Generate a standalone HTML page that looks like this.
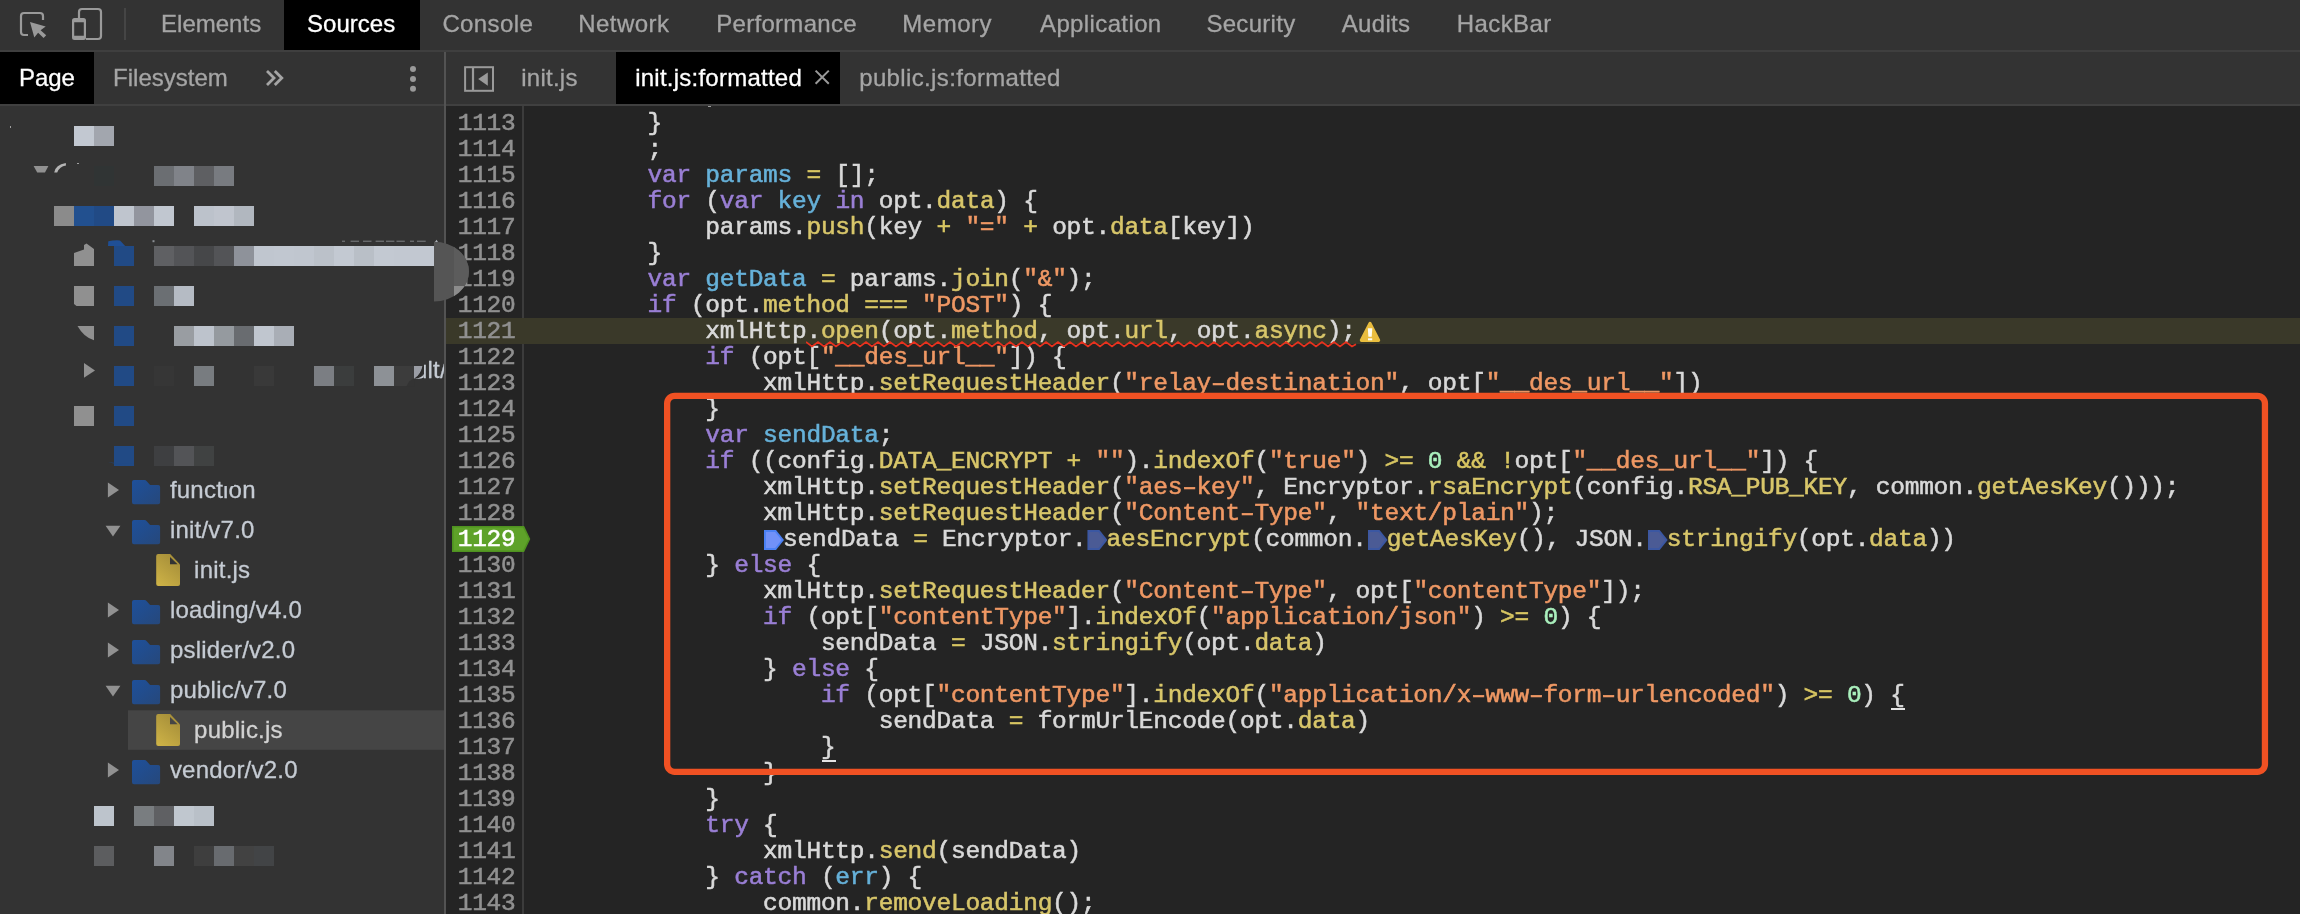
<!DOCTYPE html>
<html>
<head>
<meta charset="utf-8">
<title>DevTools</title>
<style>
html,body{margin:0;padding:0;}
body{width:2300px;height:914px;overflow:hidden;background:#333333;position:relative;font-family:"Liberation Sans",sans-serif;color:#a5a5a5;}
.abs{position:absolute;}
/* top toolbar */
#topbar{left:0;top:0;width:2300px;height:50px;background:#333333;}
#topline{left:0;top:50px;width:2300px;height:2px;background:#3f3f3f;}
.ttab{position:absolute;top:0;height:50px;line-height:47px;font-size:24px;color:#a5a5a5;white-space:nowrap;-webkit-text-stroke:0.3px;}
.ttab.sel{background:#000;color:#fff;}
/* second row */
#row2{left:0;top:52px;width:2300px;height:52px;background:#333333;}
#row2line{left:0;top:104px;width:2300px;height:2px;background:#404040;}
.stab{position:absolute;top:52px;height:52px;line-height:51px;font-size:24px;color:#a5a5a5;white-space:nowrap;-webkit-text-stroke:0.3px;}
.et{letter-spacing:0.24px;}
.stab.sel{background:#000;color:#fff;}
/* sidebar */
#sidebar{left:0;top:106px;width:444px;height:808px;background:#333333;}
#vdiv{left:444px;top:52px;width:2px;height:862px;background:#535353;}
.b{position:absolute;display:block;}
.tt{position:absolute;height:40px;line-height:40px;font-size:24px;color:#c5cbd3;white-space:nowrap;letter-spacing:0.22px;-webkit-text-stroke:0.3px;}
/* editor */
#editor{left:446px;top:106px;width:1854px;height:808px;background:#242424;}
#gutterline{left:522px;top:106px;width:2px;height:808px;background:#3c3c3c;}
.ln{position:absolute;left:446px;width:69.5px;text-align:right;height:26px;line-height:26px;font-family:"Liberation Mono",monospace;font-size:24.5px;letter-spacing:-0.2524px;color:#909090;white-space:pre;-webkit-text-stroke:0.55px;}
.cl{position:absolute;left:531.9px;height:26px;line-height:26px;font-family:"Liberation Mono",monospace;font-size:24.5px;letter-spacing:-0.2524px;color:#d9d9d9;white-space:pre;-webkit-text-stroke:0.55px;}
.k{color:#9a7fd5;}
.d{color:#66b1d9;}
.p{color:#d8c66a;}
.s{color:#ef9864;}
.n{color:#aaf0bd;}
.o{color:#d8c662;}
.w{color:inherit;}
.p.w{color:#d8c66a;}
.u{}
.ul{height:2px;width:14.6px;background:#e4e4e4;}
.hl{left:446px;width:1854px;height:26px;background:#3a3929;}
.bpln{left:452px;width:80px;height:26px;}
.lnbp{color:#fff;}
.bp0,.bp1{display:inline-block;width:20px;height:20px;vertical-align:-4px;margin:0 -0.9px 0 0.9px;letter-spacing:0;}
.bp0,.bp1{position:relative;clip-path:polygon(0 0,60% 0,100% 50%,60% 100%,0 100%);}
.bp0::after,.bp1::after{content:"";position:absolute;left:1.7px;top:1.7px;right:2.4px;bottom:1.7px;clip-path:polygon(0 0,58% 0,100% 50%,58% 100%,0 100%);}
.bp1{background:#4b81f4;}
.bp1::after{background:#7191f8;}
.bp0{background:#3b57a2;}
.bp0::after{background:#4b5b95;}
.warn{position:absolute;left:1358px;top:320px;}


</style>
</head>
<body>
<div id="root" class="abs" style="left:0;top:0;width:2300px;height:914px;overflow:hidden;will-change:transform">
<div id="topbar" class="abs"></div>
<div id="topline" class="abs"></div>
<div id="row2" class="abs"></div>
<div id="row2line" class="abs"></div>
<div id="sidebar" class="abs"></div>
<div id="editor" class="abs"></div>
<div id="gutterline" class="abs"></div>
<div id="vdiv" class="abs"></div>
<svg class="abs" style="left:0;top:0" width="140" height="50" viewBox="0 0 140 50">
<path d="M28 35 H24 Q21 35 21 32 V16 Q21 13 24 13 H40 Q43 13 43 16 V20" fill="none" stroke="#9a9a9a" stroke-width="2.2"/>
<path d="M30 22 L45.7 26.6 L40.6 30.2 L46.2 35.3 L43.6 37.9 L38.1 32.7 L34.3 37.6 Z" fill="#9a9a9a"/>
<path d="M79 18 V12 Q79 9 82 9 H98 Q101 9 101 12 V36 Q101 39 98 39 H86" fill="none" stroke="#9a9a9a" stroke-width="2.2"/>
<path d="M74.5 18 H83.5 Q86 18 86 20.5 V37.5 Q86 40 83.5 40 H74.5 Q72 40 72 37.5 V20.5 Q72 18 74.5 18 Z M74.2 22.2 V35.8 H83.8 V22.2 Z" fill="#9a9a9a" fill-rule="evenodd"/>
<rect x="124" y="8" width="2" height="32" fill="#454545"/>
</svg>
<div class="ttab" style="left:161.1px">Elements</div>
<div class="ttab sel" style="left:284px;width:136px"><span style="position:absolute;left:23.1px">Sources</span></div>
<div class="ttab" style="left:442.4px;letter-spacing:0.4px">Console</div>
<div class="ttab" style="left:578.2px;letter-spacing:0.45px">Network</div>
<div class="ttab" style="left:716.2px;letter-spacing:0.3px">Performance</div>
<div class="ttab" style="left:902.2px;letter-spacing:0.55px">Memory</div>
<div class="ttab" style="left:1040px;letter-spacing:0.38px">Application</div>
<div class="ttab" style="left:1206.4px;letter-spacing:0.3px">Security</div>
<div class="ttab" style="left:1341.8px;letter-spacing:0.3px">Audits</div>
<div class="ttab" style="left:1456.8px;letter-spacing:0.4px">HackBar</div>

<div class="stab sel" style="left:0;width:94px"><span style="position:absolute;left:18.9px">Page</span></div>
<div class="stab" style="left:113.1px">Filesystem</div>
<svg class="abs" style="left:260px;top:60px" width="30" height="36" viewBox="0 0 30 36"><path d="M7 11 L14 18 L7 25 M14.8 11 L21.8 18 L14.8 25" fill="none" stroke="#a5a5a5" stroke-width="2.8"/></svg>
<svg class="abs" style="left:405px;top:60px" width="16" height="36" viewBox="0 0 16 36"><circle cx="8" cy="9" r="3" fill="#9a9a9a"/><circle cx="8" cy="19" r="3" fill="#9a9a9a"/><circle cx="8" cy="28.7" r="3" fill="#9a9a9a"/></svg>
<svg class="abs" style="left:462px;top:64px" width="36" height="30" viewBox="0 0 36 30"><rect x="3.1" y="3.2" width="27.9" height="23.6" fill="none" stroke="#9a9a9a" stroke-width="2"/><rect x="9.9" y="3.2" width="2.2" height="23.6" fill="#9a9a9a"/><path d="M25.8 8.5 V21.7 L16.2 15.1 Z" fill="#9a9a9a"/></svg>
<div class="stab et" style="left:521.3px">init.js</div>
<div class="stab sel" style="left:616px;width:224px"><span class="et" style="position:absolute;left:19.2px">init.js:formatted</span></div>
<svg class="abs" style="left:812.3px;top:67px" width="20" height="20" viewBox="0 0 20 20"><path d="M3.6 3.6 L16.8 16.8 M16.8 3.6 L3.6 16.8" fill="none" stroke="#9a9a9a" stroke-width="2"/></svg>
<div class="stab et" style="left:859.2px;letter-spacing:0.36px">public.js:formatted</div>

<i class="b" style="left:74px;top:126px;width:20px;height:20px;background:#c2c8d1"></i>
<i class="b" style="left:94px;top:126px;width:20px;height:20px;background:#a2a6ae"></i>
<i class="b" style="left:154px;top:166px;width:20px;height:20px;background:#6b6e72"></i>
<i class="b" style="left:174px;top:166px;width:20px;height:20px;background:#808389"></i>
<i class="b" style="left:194px;top:166px;width:20px;height:20px;background:#5e5f62"></i>
<i class="b" style="left:214px;top:166px;width:20px;height:20px;background:#787b80"></i>
<i class="b" style="left:94px;top:166px;width:20px;height:20px;background:#303434"></i>
<i class="b" style="left:54px;top:206px;width:20px;height:20px;background:#8b8b8b"></i>
<i class="b" style="left:74px;top:206px;width:20px;height:20px;background:#22508f"></i>
<i class="b" style="left:94px;top:206px;width:20px;height:20px;background:#214a85"></i>
<i class="b" style="left:114px;top:206px;width:20px;height:20px;background:#bfc5ce"></i>
<i class="b" style="left:134px;top:206px;width:20px;height:20px;background:#92959e"></i>
<i class="b" style="left:154px;top:206px;width:20px;height:20px;background:#c1c7d0"></i>
<i class="b" style="left:194px;top:206px;width:20px;height:20px;background:#bcc2cb"></i>
<i class="b" style="left:214px;top:206px;width:20px;height:20px;background:#c0c5ce"></i>
<i class="b" style="left:234px;top:206px;width:20px;height:20px;background:#b1b7bf"></i>
<i class="b" style="left:114px;top:246px;width:20px;height:20px;background:#214a85"></i>
<i class="b" style="left:154px;top:246px;width:20px;height:20px;background:#5f6063"></i>
<i class="b" style="left:174px;top:246px;width:20px;height:20px;background:#535457"></i>
<i class="b" style="left:194px;top:246px;width:20px;height:20px;background:#464749"></i>
<i class="b" style="left:214px;top:246px;width:20px;height:20px;background:#535457"></i>
<i class="b" style="left:234px;top:246px;width:20px;height:20px;background:#8e929a"></i>
<i class="b" style="left:254px;top:246px;width:20px;height:20px;background:#c0c6cf"></i>
<i class="b" style="left:274px;top:246px;width:20px;height:20px;background:#c1c7d0"></i>
<i class="b" style="left:294px;top:246px;width:20px;height:20px;background:#c0c6cf"></i>
<i class="b" style="left:314px;top:246px;width:20px;height:20px;background:#bbc1c9"></i>
<i class="b" style="left:334px;top:246px;width:20px;height:20px;background:#c3c9d2"></i>
<i class="b" style="left:354px;top:246px;width:20px;height:20px;background:#b9bfc7"></i>
<i class="b" style="left:374px;top:246px;width:20px;height:20px;background:#c3c9d2"></i>
<i class="b" style="left:394px;top:246px;width:20px;height:20px;background:#c2c8d1"></i>
<i class="b" style="left:414px;top:246px;width:20px;height:20px;background:#c2c8d1"></i>
<i class="b" style="left:114px;top:286px;width:20px;height:20px;background:#214a85"></i>
<i class="b" style="left:154px;top:286px;width:20px;height:20px;background:#6b6f73"></i>
<i class="b" style="left:174px;top:286px;width:20px;height:20px;background:#b5bbc4"></i>
<i class="b" style="left:114px;top:326px;width:20px;height:20px;background:#214a85"></i>
<i class="b" style="left:174px;top:326px;width:20px;height:20px;background:#999da2"></i>
<i class="b" style="left:194px;top:326px;width:20px;height:20px;background:#bdc3cc"></i>
<i class="b" style="left:214px;top:326px;width:20px;height:20px;background:#959a9f"></i>
<i class="b" style="left:234px;top:326px;width:20px;height:20px;background:#696c70"></i>
<i class="b" style="left:254px;top:326px;width:20px;height:20px;background:#c0c6cf"></i>
<i class="b" style="left:274px;top:326px;width:20px;height:20px;background:#a9aeb6"></i>
<i class="b" style="left:114px;top:366px;width:20px;height:20px;background:#214a85"></i>
<i class="b" style="left:154px;top:366px;width:20px;height:20px;background:#363636"></i>
<i class="b" style="left:194px;top:366px;width:20px;height:20px;background:#787c80"></i>
<i class="b" style="left:254px;top:366px;width:20px;height:20px;background:#393939"></i>
<i class="b" style="left:314px;top:366px;width:20px;height:20px;background:#7b7e83"></i>
<i class="b" style="left:334px;top:366px;width:20px;height:20px;background:#3b3d3d"></i>
<i class="b" style="left:374px;top:366px;width:20px;height:20px;background:#8d9196"></i>
<i class="b" style="left:394px;top:366px;width:20px;height:20px;background:#3c3c3c"></i>
<i class="b" style="left:74px;top:406px;width:20px;height:20px;background:#909090"></i>
<i class="b" style="left:114px;top:406px;width:20px;height:20px;background:#214a85"></i>
<i class="b" style="left:114px;top:446px;width:20px;height:20px;background:#214a85"></i>
<i class="b" style="left:154px;top:446px;width:20px;height:20px;background:#3e3f41"></i>
<i class="b" style="left:174px;top:446px;width:20px;height:20px;background:#535457"></i>
<i class="b" style="left:194px;top:446px;width:20px;height:20px;background:#404242"></i>
<i class="b" style="left:94px;top:806px;width:20px;height:20px;background:#bdc4cc"></i>
<i class="b" style="left:134px;top:806px;width:20px;height:20px;background:#797d80"></i>
<i class="b" style="left:154px;top:806px;width:20px;height:20px;background:#5f6063"></i>
<i class="b" style="left:174px;top:806px;width:20px;height:20px;background:#c0c7cf"></i>
<i class="b" style="left:194px;top:806px;width:20px;height:20px;background:#b9c0c8"></i>
<i class="b" style="left:94px;top:846px;width:20px;height:20px;background:#5c5d5f"></i>
<i class="b" style="left:154px;top:846px;width:20px;height:20px;background:#82858a"></i>
<i class="b" style="left:194px;top:846px;width:20px;height:20px;background:#3e3e3e"></i>
<i class="b" style="left:214px;top:846px;width:20px;height:20px;background:#686b6f"></i>
<i class="b" style="left:234px;top:846px;width:20px;height:20px;background:#424242"></i>
<i class="b" style="left:254px;top:846px;width:20px;height:20px;background:#424446"></i>
<svg class="abs" style="left:0;top:106px" width="480" height="380" viewBox="0 106 480 380">
<path d="M33.6 166 H48.4 L45 172.6 H37.2 Z" fill="#919191"/>
<path d="M54.2 172.6 Q55.5 164.5 65.8 163 L66 165.6 Q59.5 166.5 57.2 172.6 Z" fill="#b4b4b4"/>
<path d="M74 253 L84 249.5 V245 L86.5 243.6 L94 249 V266 H74 Z" fill="#909090"/>
<path d="M108 246 L108.3 241.2 Q114 240 120 240.4 L125.2 246 Z" fill="#1f4f96"/>
<path d="M74 286 H94 V306 H76.5 L74 304 Z" fill="#909090"/>
<path d="M77.5 326 H94 V340.2 Q84 337.5 77.5 326 Z" fill="#909090"/>
<path d="M84 363 L95 370.4 L84 377.8 Z" fill="#919191"/>
<path d="M108 462.3 Q120 464 134 463 V466 Q120 465.5 108 462.3 Z" fill="#214a85"/>
<path d="M406.5 386.2 Q408.5 380.5 414.2 378.6 V386.2 Z" fill="#333333"/>
<path d="M414 366 H422.6 Q421 374.5 414.6 378.5 H414 Z" fill="#9a9da5"/>
<path d="M422.6 366 Q421 374.5 414.6 378.5 L419.5 377.6 Q423.3 374.5 423.8 366 Z" fill="#2b2b2b"/>
<path d="M414.8 378.5 Q421.5 378.4 423.8 374 L423.8 377.5 Q420 379.4 414.8 378.5 Z" fill="#c5cbd3"/>
</svg>
<div class="abs" style="left:423.6px;top:355px;width:20.4px;height:30px;overflow:hidden;"><span class="tt" style="position:absolute;left:-9.6px;top:0;line-height:30px">ult/</span></div>
<svg class="abs" style="left:0;top:470px" width="444" height="320" viewBox="0 470 444 320"><defs><linearGradient id="fg" x1="0" y1="0" x2="1" y2="1"><stop offset="0" stop-color="#1e509b"/><stop offset="1" stop-color="#26487b"/></linearGradient><linearGradient id="yg" x1="0.8" y1="0" x2="0.2" y2="1"><stop offset="0" stop-color="#a38c38"/><stop offset="1" stop-color="#ccb146"/></linearGradient></defs><rect x="128" y="710.3" width="316" height="39.5" fill="#454545"/><path d="M107.9 482.6 L119 490 L107.9 497.4 Z" fill="#919191"/><path d="M132 482 q0 -2 2 -2 h10.5 q1.2 0 2 0.9 l3.6 4.1 h8 q2 0 2 2 v15.2 q0 2 -2 2 h-24.1 q-2 0 -2 -2 Z" fill="url(#fg)"/><path d="M105.6 525.8 L120.4 525.8 L113 536.6 Z" fill="#919191"/><path d="M132 522 q0 -2 2 -2 h10.5 q1.2 0 2 0.9 l3.6 4.1 h8 q2 0 2 2 v15.2 q0 2 -2 2 h-24.1 q-2 0 -2 -2 Z" fill="url(#fg)"/><path d="M156.2 556 q0 -2 2 -2 h12 l9.8 10.4 v19.6 q0 2 -2 2 h-19.8 q-2 0 -2 -2 Z" fill="url(#yg)"/><path d="M170 557 v7.2 h7.6 Z" fill="#333333"/><path d="M107.9 602.6 L119 610 L107.9 617.4 Z" fill="#919191"/><path d="M132 602 q0 -2 2 -2 h10.5 q1.2 0 2 0.9 l3.6 4.1 h8 q2 0 2 2 v15.2 q0 2 -2 2 h-24.1 q-2 0 -2 -2 Z" fill="url(#fg)"/><path d="M107.9 642.6 L119 650 L107.9 657.4 Z" fill="#919191"/><path d="M132 642 q0 -2 2 -2 h10.5 q1.2 0 2 0.9 l3.6 4.1 h8 q2 0 2 2 v15.2 q0 2 -2 2 h-24.1 q-2 0 -2 -2 Z" fill="url(#fg)"/><path d="M105.6 685.8 L120.4 685.8 L113 696.6 Z" fill="#919191"/><path d="M132 682 q0 -2 2 -2 h10.5 q1.2 0 2 0.9 l3.6 4.1 h8 q2 0 2 2 v15.2 q0 2 -2 2 h-24.1 q-2 0 -2 -2 Z" fill="url(#fg)"/><path d="M156.2 716 q0 -2 2 -2 h12 l9.8 10.4 v19.6 q0 2 -2 2 h-19.8 q-2 0 -2 -2 Z" fill="url(#yg)"/><path d="M170 717 v7.2 h7.6 Z" fill="#454545"/><path d="M107.9 762.6 L119 770 L107.9 777.4 Z" fill="#919191"/><path d="M132 762 q0 -2 2 -2 h10.5 q1.2 0 2 0.9 l3.6 4.1 h8 q2 0 2 2 v15.2 q0 2 -2 2 h-24.1 q-2 0 -2 -2 Z" fill="url(#fg)"/></svg>
<div class="tt" style="left:169.9px;top:470px">function</div>
<div class="tt" style="left:169.9px;top:510px">init/v7.0</div>
<div class="tt" style="left:194.1px;top:550px">init.js</div>
<div class="tt" style="left:169.9px;top:590px">loading/v4.0</div>
<div class="tt" style="left:169.9px;top:630px">pslider/v2.0</div>
<div class="tt" style="left:169.9px;top:670px">public/v7.0</div>
<div class="tt" style="left:194.1px;top:710px;color:#d2d2d2">public.js</div>
<div class="tt" style="left:169.9px;top:750px">vendor/v2.0</div>
<div class="ln" style="top:111px">1113</div>
<div class="cl" style="top:111px">        }</div>
<div class="ln" style="top:137px">1114</div>
<div class="cl" style="top:137px">        ;</div>
<div class="ln" style="top:163px">1115</div>
<div class="cl" style="top:163px">        <span class="k">var</span> <span class="d">params</span> <span class="o">=</span> [];</div>
<div class="ln" style="top:189px">1116</div>
<div class="cl" style="top:189px">        <span class="k">for</span> (<span class="k">var</span> <span class="d">key</span> <span class="k">in</span> opt.<span class="p">data</span>) {</div>
<div class="ln" style="top:215px">1117</div>
<div class="cl" style="top:215px">            params.<span class="p">push</span>(key <span class="o">+</span> <span class="s">"="</span> <span class="o">+</span> opt.<span class="p">data</span>[key])</div>
<div class="ln" style="top:241px">1118</div>
<div class="cl" style="top:241px">        }</div>
<div class="ln" style="top:267px">1119</div>
<div class="cl" style="top:267px">        <span class="k">var</span> <span class="d">getData</span> <span class="o">=</span> params.<span class="p">join</span>(<span class="s">"&amp;"</span>);</div>
<div class="ln" style="top:293px">1120</div>
<div class="cl" style="top:293px">        <span class="k">if</span> (opt.<span class="p">method</span> <span class="o">===</span> <span class="s">"POST"</span>) {</div>
<div class="abs hl" style="top:318px"></div>
<div class="ln" style="top:319px">1121</div>
<div class="cl" style="top:319px">            xmlHttp<span class="w">.</span><span class="p w">open</span><span class="w">(opt.</span><span class="p w">method</span><span class="w">, opt.</span><span class="p w">url</span><span class="w">, opt.</span><span class="p w">async</span><span class="w">);</span></div><div><svg class="warn" width="24" height="24" viewBox="1358 320 24 24"><path d="M1370 323.4 L1378.6 340.3 H1361.4 Z" fill="#e9bd3e" stroke="#e9bd3e" stroke-width="3.2" stroke-linejoin="round"/><path d="M1367.8 328.2 H1372.3 L1371.7 336.8 H1368.4 Z" fill="#fffdf2"/><rect x="1368" y="338.3" width="4.2" height="2" fill="#fffdf2"/></svg></div>
<div class="ln" style="top:345px">1122</div>
<div class="cl" style="top:345px">            <span class="k">if</span> (opt[<span class="s">"__des_url__"</span>]) {</div>
<div class="ln" style="top:371px">1123</div>
<div class="cl" style="top:371px">                xmlHttp.<span class="p">setRequestHeader</span>(<span class="s">"relay–destination"</span>, opt[<span class="s">"__des_url__"</span>])</div>
<div class="ln" style="top:397px">1124</div>
<div class="cl" style="top:397px">            }</div>
<div class="ln" style="top:423px">1125</div>
<div class="cl" style="top:423px">            <span class="k">var</span> <span class="d">sendData</span>;</div>
<div class="ln" style="top:449px">1126</div>
<div class="cl" style="top:449px">            <span class="k">if</span> ((config.<span class="p">DATA_ENCRYPT</span> <span class="o">+</span> <span class="s">""</span>).<span class="p">indexOf</span>(<span class="s">"true"</span>) <span class="o">&gt;=</span> <span class="n">0</span> <span class="o">&amp;&amp;</span> <span class="o">!</span>opt[<span class="s">"__des_url__"</span>]) {</div>
<div class="ln" style="top:475px">1127</div>
<div class="cl" style="top:475px">                xmlHttp.<span class="p">setRequestHeader</span>(<span class="s">"aes–key"</span>, Encryptor.<span class="p">rsaEncrypt</span>(config.<span class="p">RSA_PUB_KEY</span>, common.<span class="p">getAesKey</span>()));</div>
<div class="ln" style="top:501px">1128</div>
<div class="cl" style="top:501px">                xmlHttp.<span class="p">setRequestHeader</span>(<span class="s">"Content–Type"</span>, <span class="s">"text/plain"</span>);</div>
<div class="abs bpln" style="top:526px"><svg width="80" height="26" viewBox="0 0 80 26"><path d="M0.8 0.8 H71.6 L77.4 13 L71.6 25.2 H0.8 Z" fill="#5ea229" stroke="#4f9220" stroke-width="1.6"/></svg></div>
<div class="ln lnbp" style="top:527px">1129</div>
<div class="cl" style="top:527px">                <i class="bp1"></i>sendData <span class="o">=</span> Encryptor.<i class="bp0"></i><span class="p">aesEncrypt</span>(common.<i class="bp0"></i><span class="p">getAesKey</span>(), JSON.<i class="bp0"></i><span class="p">stringify</span>(opt.<span class="p">data</span>))</div>
<div class="ln" style="top:553px">1130</div>
<div class="cl" style="top:553px">            } <span class="k">else</span> {</div>
<div class="ln" style="top:579px">1131</div>
<div class="cl" style="top:579px">                xmlHttp.<span class="p">setRequestHeader</span>(<span class="s">"Content–Type"</span>, opt[<span class="s">"contentType"</span>]);</div>
<div class="ln" style="top:605px">1132</div>
<div class="cl" style="top:605px">                <span class="k">if</span> (opt[<span class="s">"contentType"</span>].<span class="p">indexOf</span>(<span class="s">"application/json"</span>) <span class="o">&gt;=</span> <span class="n">0</span>) {</div>
<div class="ln" style="top:631px">1133</div>
<div class="cl" style="top:631px">                    sendData <span class="o">=</span> JSON.<span class="p">stringify</span>(opt.<span class="p">data</span>)</div>
<div class="ln" style="top:657px">1134</div>
<div class="cl" style="top:657px">                } <span class="k">else</span> {</div>
<div class="ln" style="top:683px">1135</div>
<div class="cl" style="top:683px">                    <span class="k">if</span> (opt[<span class="s">"contentType"</span>].<span class="p">indexOf</span>(<span class="s">"application/x–www–form–urlencoded"</span>) <span class="o">&gt;=</span> <span class="n">0</span>) <span class="u">{</span></div>
<div class="ln" style="top:709px">1136</div>
<div class="cl" style="top:709px">                        sendData <span class="o">=</span> formUrlEncode(opt.<span class="p">data</span>)</div>
<div class="ln" style="top:735px">1137</div>
<div class="cl" style="top:735px">                    <span class="u">}</span></div>
<div class="ln" style="top:761px">1138</div>
<div class="cl" style="top:761px">                }</div>
<div class="ln" style="top:787px">1139</div>
<div class="cl" style="top:787px">            }</div>
<div class="ln" style="top:813px">1140</div>
<div class="cl" style="top:813px">            <span class="k">try</span> {</div>
<div class="ln" style="top:839px">1141</div>
<div class="cl" style="top:839px">                xmlHttp.<span class="p">send</span>(sendData)</div>
<div class="ln" style="top:865px">1142</div>
<div class="cl" style="top:865px">            } <span class="k">catch</span> (<span class="d">err</span>) {</div>
<div class="ln" style="top:891px">1143</div>
<div class="cl" style="top:891px">                common.<span class="p">removeLoading</span>();</div>
<svg class="abs" style="left:806.2px;top:338.7px" width="552" height="12" viewBox="0 0 552 12"><path id="wav" d="M0.0 3.0 L6.0 7.4 L12.0 3.0 L18.0 7.4 L24.0 3.0 L30.0 7.4 L36.0 3.0 L42.0 7.4 L48.0 3.0 L54.0 7.4 L60.0 3.0 L66.0 7.4 L72.0 3.0 L78.0 7.4 L84.0 3.0 L90.0 7.4 L96.0 3.0 L102.0 7.4 L108.0 3.0 L114.0 7.4 L120.0 3.0 L126.0 7.4 L132.0 3.0 L138.0 7.4 L144.0 3.0 L150.0 7.4 L156.0 3.0 L162.0 7.4 L168.0 3.0 L174.0 7.4 L180.0 3.0 L186.0 7.4 L192.0 3.0 L198.0 7.4 L204.0 3.0 L210.0 7.4 L216.0 3.0 L222.0 7.4 L228.0 3.0 L234.0 7.4 L240.0 3.0 L246.0 7.4 L252.0 3.0 L258.0 7.4 L264.0 3.0 L270.0 7.4 L276.0 3.0 L282.0 7.4 L288.0 3.0 L294.0 7.4 L300.0 3.0 L306.0 7.4 L312.0 3.0 L318.0 7.4 L324.0 3.0 L330.0 7.4 L336.0 3.0 L342.0 7.4 L348.0 3.0 L354.0 7.4 L360.0 3.0 L366.0 7.4 L372.0 3.0 L378.0 7.4 L384.0 3.0 L390.0 7.4 L396.0 3.0 L402.0 7.4 L408.0 3.0 L414.0 7.4 L420.0 3.0 L426.0 7.4 L432.0 3.0 L438.0 7.4 L444.0 3.0 L450.0 7.4 L456.0 3.0 L462.0 7.4 L468.0 3.0 L474.0 7.4 L480.0 3.0 L486.0 7.4 L492.0 3.0 L498.0 7.4 L504.0 3.0 L510.0 7.4 L516.0 3.0 L522.0 7.4 L528.0 3.0 L534.0 7.4 L540.0 3.0 L546.0 7.4 L550.0 5.2" fill="none" stroke="#e8321e" stroke-width="1.7"/></svg>
<svg class="abs" style="left:660px;top:388px" width="1612" height="392" viewBox="660 388 1612 392"><rect x="667.15" y="395.85" width="1597.8" height="376" rx="7.6" ry="7.6" fill="none" stroke="#f05123" stroke-width="6.3"/></svg>
<svg class="abs" style="left:430px;top:236px" width="44" height="70" viewBox="430 236 44 70">
<path d="M434 241.8 A35 29.8 0 0 1 434 301.4 Z" fill="#555555"/>
<clipPath id="dc"><path d="M434 241.8 A35 29.8 0 0 1 434 301.4 Z"/></clipPath>
<g clip-path="url(#dc)"><rect x="454" y="236" width="20" height="70" fill="#5c5c5c"/><rect x="454" y="286" width="20" height="20" fill="#8c8c8c"/></g>
</svg>
<div class="abs ul" style="left:1890.7px;top:708px"></div>
<div class="abs ul" style="left:821.6px;top:760px"></div>
<svg class="abs" style="left:150px;top:238px" width="300" height="6" viewBox="150 238 300 6"><rect x="342" y="240.6" width="3" height="1.3" fill="#c5cbd3" opacity="0.4"/><rect x="350.6" y="240.6" width="8.4" height="1.3" fill="#c5cbd3" opacity="0.4"/><rect x="363" y="240.6" width="8.5" height="1.3" fill="#c5cbd3" opacity="0.4"/><rect x="375.6" y="240.6" width="8.4" height="1.3" fill="#c5cbd3" opacity="0.4"/><rect x="386" y="240.6" width="8.4" height="1.3" fill="#c5cbd3" opacity="0.4"/><rect x="396.5" y="240.6" width="8.3" height="1.3" fill="#c5cbd3" opacity="0.4"/><rect x="410" y="240.6" width="4" height="1.3" fill="#c5cbd3" opacity="0.4"/><rect x="417" y="240.6" width="8.7" height="1.3" fill="#c5cbd3" opacity="0.4"/><rect x="152.5" y="240.2" width="2" height="2" fill="#c5cbd3" opacity="0.6"/><path d="M435 242 L436.5 239.8 L438 242 Z" fill="#c5cbd3" opacity="0.8"/></svg>
<div class="abs" style="left:222.5px;top:478px;width:11.5px;height:8.3px;background:#333333"></div>
<div class="abs" style="left:708px;top:105.8px;width:3px;height:1.3px;background:#9c9c9c"></div>
<div class="abs" style="left:9.8px;top:126.2px;width:1.6px;height:1.6px;background:#a0a0a0"></div>
<div class="abs" style="left:77.4px;top:163px;width:1.6px;height:1.2px;background:#a0a0a0"></div>

</div>
</body>
</html>
